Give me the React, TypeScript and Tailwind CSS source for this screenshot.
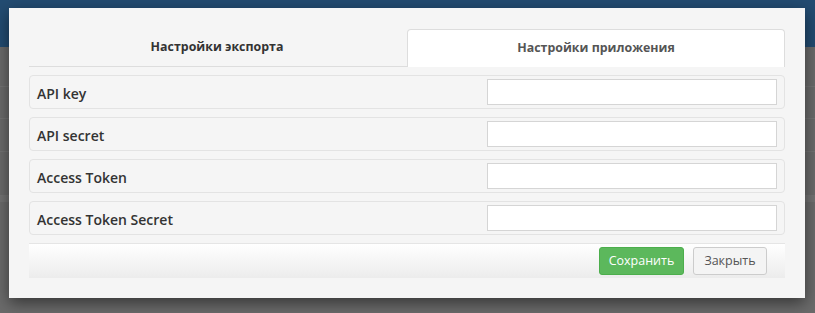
import { useState } from 'react';

const fields = ['API key', 'API secret', 'Access Token', 'Access Token Secret'];

export default function App() {
  const [tab, setTab] = useState(1);

  return (
    <div className="relative h-[313px] w-[815px] overflow-hidden bg-[#6b6b6b] font-['Open_Sans',sans-serif]">
      {/* page behind the backdrop */}
      <div className="h-[47px] bg-[#234c72]" />
      <div className="flex flex-col">
        <div className="h-[40px] border-b border-[#747474]" />
        <div className="h-[32px] border-b border-[#747474]" />
        <div className="h-[33px] border-b border-[#747474]" />
        <div className="h-[44px] border-b border-[#747474]" />
        <div className="h-[6px] bg-[#737373]" />
      </div>

      {/* modal */}
      <div className="absolute left-[9px] top-[8px] w-[796px] bg-[#f5f5f5] px-[20px] pt-[21px] pb-[20px] shadow-[0_5px_15px_rgba(0,0,0,0.5)]">
        <div className="flex border-b border-[#dddddd]">
          {['Настройки экспорта', 'Настройки приложения'].map((t, i) => (
            <button
              key={t}
              onClick={() => setTab(i)}
              className={
                i === tab
                  ? '-mb-px ml-[2px] h-[38px] flex-1 rounded-t-[4px] border border-b-0 border-[#dddddd] bg-white text-[12.4px] font-bold text-[#555555]'
                  : 'h-[37px] flex-1 text-[12.4px] font-bold text-[#333333]'
              }
            >
              {t}
            </button>
          ))}
        </div>

        <div className="mt-[8px] flex flex-col gap-[8px]">
          {fields.map((f) => (
            <div
              key={f}
              className="flex h-[34px] items-center justify-between rounded-[4px] border border-[#e3e3e3] bg-[#f5f5f5] pl-[7px] pr-[7px]"
            >
              <span className="mt-[2px] text-[14px] font-semibold text-[#333333]">{f}</span>
              <input className="h-[26px] w-[290px] border border-[#d5d5d5] bg-white px-2 text-[13px] outline-none" />
            </div>
          ))}
        </div>

        <div className="mt-[8px] flex h-[35px] items-center justify-end gap-[9px] border-t border-[#e5e5e5] bg-gradient-to-b from-white to-[#ececec] pr-[18px]">
          <button className="h-[28px] w-[85px] rounded-[3px] border border-[#4cae4c] bg-[#5cb85c] text-[12.5px] text-white">
            Сохранить
          </button>
          <button className="h-[28px] w-[74px] rounded-[3px] border border-[#cccccc] bg-[#f4f4f4] text-[12.5px] text-[#555555]">
            Закрыть
          </button>
        </div>
      </div>
    </div>
  );
}
